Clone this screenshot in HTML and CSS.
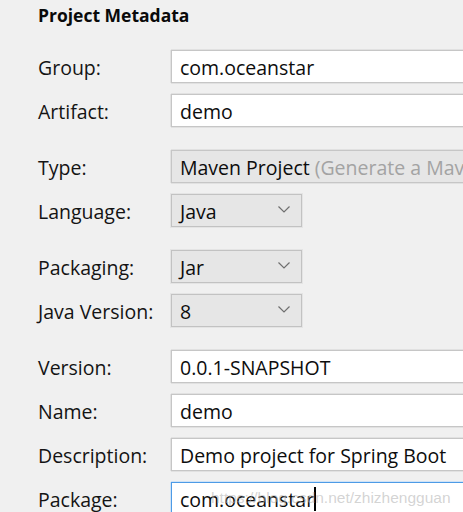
FILE: index.html
```html
<!DOCTYPE html>
<html>
<head>
<meta charset="utf-8">
<link rel="stylesheet" href="styles.css">
</head>
<body>
<div class="panel">
  <h1 class="title">Project Metadata</h1>
  <div class="group">
    <label class="label">Group:</label>
    <div class="field">com.oceanstar</div>
    <label class="label">Artifact:</label>
    <div class="field">demo</div>
  </div>
  <div class="group">
    <label class="label">Type:</label>
    <div class="field combo-wide">Maven Project <span class="hint">(Generate a Maven based project archive.)</span></div>
    <label class="label">Language:</label>
    <div class="combo">Java<svg class="chev" width="12" height="7" viewBox="0 0 12 7"><path d="M0.5 0.5 L6 6 L11.5 0.5" fill="none" stroke="#6f6f6f" stroke-width="1.2"/></svg></div>
  </div>
  <div class="group">
    <label class="label">Packaging:</label>
    <div class="combo">Jar<svg class="chev" width="12" height="7" viewBox="0 0 12 7"><path d="M0.5 0.5 L6 6 L11.5 0.5" fill="none" stroke="#6f6f6f" stroke-width="1.2"/></svg></div>
    <label class="label">Java Version:</label>
    <div class="combo">8<svg class="chev" width="12" height="7" viewBox="0 0 12 7"><path d="M0.5 0.5 L6 6 L11.5 0.5" fill="none" stroke="#6f6f6f" stroke-width="1.2"/></svg></div>
  </div>
  <div class="group">
    <label class="label">Version:</label>
    <div class="field">0.0.1-SNAPSHOT</div>
    <label class="label">Name:</label>
    <div class="field">demo</div>
    <label class="label">Description:</label>
    <div class="field">Demo project for Spring Boot</div>
    <label class="label">Package:</label>
    <div class="field focused"><span class="val">com.oceanstar</span><span class="caret"></span><span class="watermark">https://blog.csdn.net/zhizhengguan</span></div>
  </div>
</div>
</body>
</html>
```

FILE: styles.css
```css
html, body {
  margin: 0;
  padding: 0;
  background: #f0f0f0;
  overflow: hidden;
  width: 463px;
  height: 512px;
}

.panel {
  box-sizing: border-box;
  width: 463px;
  height: 512px;
  overflow: hidden;
  padding: 4px 0 0 38px;
  font-family: "Open Sans", "Noto Sans", sans-serif;
  font-size: 19.5px;
  color: #0d0d0d;
}

.title {
  margin: 0;
  height: 23px;
  line-height: 23px;
  font-size: 17.5px;
  font-weight: 700;
  color: #0a0a0a;
  margin-bottom: 23px;
}

.group {
  display: grid;
  grid-template-columns: 133px 1fr;
  grid-auto-rows: 33px;
  row-gap: 11px;
  align-items: center;
  margin-bottom: 23px;
}

.label {
  color: #141414;
  padding-top: 1px;
  white-space: nowrap;
}

.field {
  box-sizing: border-box;
  height: 33px;
  background: #fff;
  border: 1px solid #c6c6c6;
  border-right: none;
  box-shadow: -1px 0 0 0 #e1e1e1, 0 -1px 0 0 #e1e1e1, 0 1px 0 0 #e1e1e1;
  padding: 1px 0 0 8px;
  display: flex;
  align-items: center;
  white-space: nowrap;
  overflow: hidden;
  position: relative;
}

.combo-wide {
  background: #e6e6e6;
}

.hint {
  color: #a3a3a3;
  margin-left: 5px;
}

.combo {
  box-sizing: border-box;
  width: 131px;
  height: 33px;
  background: #e6e6e6;
  border: 1px solid #c2c2c2;
  box-shadow: 0 0 0 1px #e4e4e4;
  padding: 2px 11px 0 8px;
  display: flex;
  align-items: center;
  justify-content: space-between;
}

.chev {
  display: block;
  margin-top: -5px;
}

.focused {
  border-color: #4d9be6;
  box-shadow: -1px 0 0 0 #cfe3f7, 0 -1px 0 0 #cfe3f7;
}

.caret {
  display: inline-block;
  width: 2px;
  height: 24px;
  background: #000;
}

.watermark {
  position: absolute;
  left: 39px;
  top: 6px;
  font-family: "Liberation Sans", Arial, sans-serif;
  font-size: 15.5px;
  color: rgba(175, 175, 175, 0.55);
  white-space: nowrap;
  pointer-events: none;
}
```
